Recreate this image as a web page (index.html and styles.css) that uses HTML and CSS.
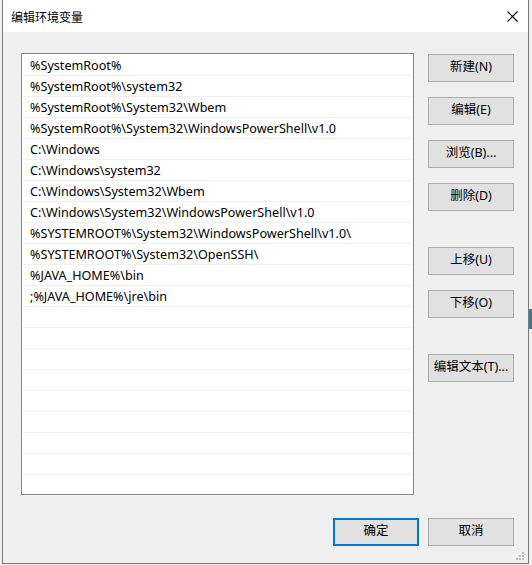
FILE: index.html
```html
<!DOCTYPE html>
<html lang="zh-CN">
<head>
<meta charset="utf-8">
<title>编辑环境变量</title>
<link rel="stylesheet" href="styles.css">
</head>
<body>
<div class="desktop">
  <div class="sliver sliver-blue"></div>
  <div class="window">
    <div class="titlebar">
      <span class="title">编辑环境变量</span>
      <span class="close" aria-label="关闭">
        <svg width="11" height="11" viewBox="0 0 11 11"><path d="M0.5 0.5 L10.5 10.5 M10.5 0.5 L0.5 10.5" stroke="#000" stroke-width="1.1" fill="none"/></svg>
      </span>
    </div>
    <div class="body">
      <div class="main">
        <div class="listbox">
          <div class="row">%SystemRoot%</div>
          <div class="row">%SystemRoot%\system32</div>
          <div class="row">%SystemRoot%\System32\Wbem</div>
          <div class="row">%SystemRoot%\System32\WindowsPowerShell\v1.0</div>
          <div class="row">C:\Windows</div>
          <div class="row">C:\Windows\system32</div>
          <div class="row">C:\Windows\System32\Wbem</div>
          <div class="row">C:\Windows\System32\WindowsPowerShell\v1.0</div>
          <div class="row">%SYSTEMROOT%\System32\WindowsPowerShell\v1.0\</div>
          <div class="row">%SYSTEMROOT%\System32\OpenSSH\</div>
          <div class="row">%JAVA_HOME%\bin</div>
          <div class="row">;%JAVA_HOME%\jre\bin</div>
          <div class="row"></div>
          <div class="row"></div>
          <div class="row"></div>
          <div class="row"></div>
          <div class="row"></div>
          <div class="row"></div>
          <div class="row"></div>
          <div class="row"></div>
        </div>
        <div class="side">
          <button class="btn">新建(N)</button>
          <button class="btn gap-s">编辑(E)</button>
          <button class="btn gap-s">浏览(B)...</button>
          <button class="btn gap-s">删除(D)</button>
          <button class="btn gap-l">上移(U)</button>
          <button class="btn gap-s">下移(O)</button>
          <button class="btn gap-l">编辑文本(T)...</button>
        </div>
      </div>
      <div class="footer">
        <button class="btn default">确定</button>
        <button class="btn">取消</button>
      </div>
      <svg class="grip" width="9" height="9" viewBox="0 0 9 9">
        <rect x="6" y="0" width="2" height="2" fill="#bcbcbc"/>
        <rect x="3" y="3" width="2" height="2" fill="#bcbcbc"/>
        <rect x="6" y="3" width="2" height="2" fill="#bcbcbc"/>
        <rect x="0" y="6" width="2" height="2" fill="#bcbcbc"/>
        <rect x="3" y="6" width="2" height="2" fill="#bcbcbc"/>
        <rect x="6" y="6" width="2" height="2" fill="#bcbcbc"/>
      </svg>
    </div>
  </div>
</div>
</body>
</html>
```

FILE: styles.css
```css
html, body {
  margin: 0;
  padding: 0;
}
body {
  background: #f0f0f0;
  font-family: "Noto Sans", "Noto Sans CJK SC", sans-serif;
  font-size: 12px;
  color: #000;
}
.desktop {
  position: relative;
  width: 532px;
  height: 565px;
  overflow: hidden;
}
.sliver {
  position: absolute;
}
.sliver-blue {
  left: 529px;
  top: 309px;
  width: 3px;
  height: 20px;
  background: #3b7893;
}
.window {
  position: relative;
  margin-left: 2px;
  width: 525px;
  height: 563px;
  border: 1px solid #7a7a7a;
  border-top: none;
  background: #f0f0f0;
  display: flex;
  flex-direction: column;
}
.titlebar {
  height: 32px;
  background: #fff;
  display: flex;
  align-items: center;
  justify-content: space-between;
  padding: 0 10px 0 8px;
}
.title {
  font-family: "Noto Sans CJK SC", sans-serif;
  font-size: 12px;
  line-height: 14px;
  margin-top: 1px;
}
.close {
  display: flex;
  width: 11px;
  height: 11px;
}
.body {
  position: relative;
  flex: 1;
  padding: 21px 14px 0 18px;
}
.main {
  display: flex;
  align-items: flex-start;
}
.listbox {
  width: 391px;
  height: 439px;
  border: 1px solid #828790;
  background: #fff;
  padding-top: 1px;
  box-sizing: content-box;
}
.row {
  height: 20px;
  line-height: 21px;
  font-size: 12.6px;
  border-bottom: 1px solid #f0f0f0;
  padding-left: 7px;
  white-space: nowrap;
  margin: 0 1px;
}
.side {
  display: flex;
  flex-direction: column;
  margin-left: 14px;
  padding-top: 1px;
}
.btn {
  width: 86px;
  height: 28px;
  box-sizing: border-box;
  border: 1px solid #adadad;
  background: #e1e1e1;
  font-family: "Noto Sans", "Noto Sans CJK SC", sans-serif;
  font-size: 12.5px;
  line-height: 14px;
  color: #000;
  padding: 0 0 2px 0;
  margin: 0;
}
.gap-s {
  margin-top: 15px;
}
.gap-l {
  margin-top: 36px;
}
.footer {
  display: flex;
  justify-content: flex-end;
  gap: 9px;
  margin-top: 23px;
}
.btn.default {
  border: 2px solid #0078d7;
}
.grip {
  position: absolute;
  right: 3px;
  bottom: 2px;
}
```
